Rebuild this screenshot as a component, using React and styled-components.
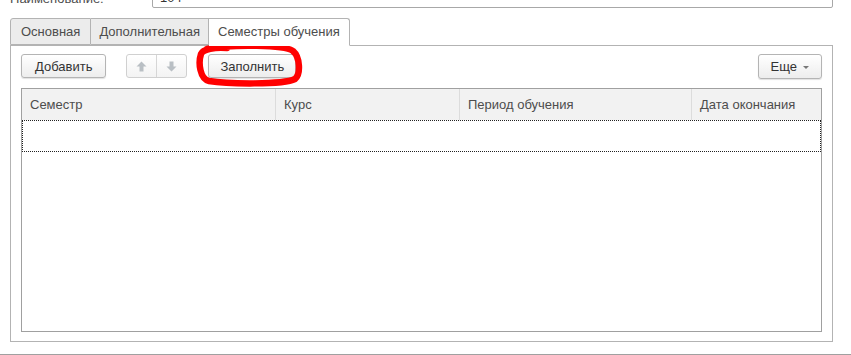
import styled, { createGlobalStyle } from "styled-components";

const Global = createGlobalStyle`
  html, body {
    margin: 0;
    padding: 0;
    background: #fff;
    font-family: "Liberation Sans", Arial, sans-serif;
    font-size: 13px;
    color: #4d4d4d;
    overflow: hidden;
  }
`;

const Page = styled.div`
  width: 851px;
  height: 355px;
  overflow: hidden;
`;

const FieldRow = styled.div`
  display: flex;
  align-items: flex-end;
  height: 24px;
  margin-top: -16px;
  padding-left: 10px;
`;

const FieldLabel = styled.div`
  width: 142px;
  line-height: 16px;
  margin-bottom: 1px;
`;

const FieldInput = styled.div`
  box-sizing: border-box;
  width: 681px;
  height: 24px;
  border: 1px solid #a8a8a8;
  border-radius: 2px;
  padding: 5px 7px 0;
  line-height: 16px;
  color: #333;
`;

const Tabs = styled.div`
  display: flex;
  align-items: flex-end;
  margin: 10px 0 0 10px;
  height: 27px;
  position: relative;
  z-index: 1;
`;

const Tab = styled.div`
  box-sizing: border-box;
  height: ${(p) => (p.$active ? "28px" : "27px")};
  margin-bottom: ${(p) => (p.$active ? "-1px" : "0")};
  padding: 0 ${(p) => p.$pad}px;
  display: flex;
  align-items: center;
  border: 1px solid #b3b3b3;
  border-left-width: ${(p) => (p.$first ? "1px" : "0")};
  border-bottom-color: ${(p) => (p.$active ? "#fff" : "#b3b3b3")};
  border-radius: ${(p) => (p.$first ? "3px 0 0 0" : p.$last ? "0 3px 0 0" : "0")};
  background: ${(p) => (p.$active ? "#fff" : "#ececec")};
  color: #4d4d4d;
  padding-bottom: ${(p) => (p.$active ? "1px" : "0")};
  white-space: nowrap;
`;

const Panel = styled.div`
  box-sizing: border-box;
  margin-left: 10px;
  width: 823px;
  height: 297px;
  border: 1px solid #b3b3b3;
  padding: 8px 10px 9px 10px;
  display: flex;
  flex-direction: column;
  gap: 10px;
`;

const Toolbar = styled.div`
  display: flex;
  align-items: flex-start;
  height: 24px;
  position: relative;
`;

const Button = styled.div`
  box-sizing: border-box;
  height: ${(p) => (p.$tall ? "25px" : "24px")};
  padding: 0 ${(p) => p.$pad || 12}px;
  display: flex;
  align-items: center;
  gap: 6px;
  border: 1px solid #b4b4b4;
  border-radius: 3px;
  background: linear-gradient(#ffffff, #ededed);
  box-shadow: 0 1px 1px rgba(0, 0, 0, 0.12);
  color: #333;
  margin-left: ${(p) => p.$ml || 0}px;
  white-space: nowrap;
`;

const Group = styled.div`
  box-sizing: border-box;
  display: flex;
  height: 24px;
  margin-left: 20px;
  border: 1px solid #d0d0d0;
  border-radius: 3px;
  background: linear-gradient(#ffffff, #f3f3f3);
`;

const GroupCell = styled.div`
  width: 29px;
  display: flex;
  align-items: center;
  justify-content: center;
  border-left: ${(p) => (p.$sep ? "1px solid #d6d6d6" : "none")};
`;

const Spacer = styled.div`
  flex: 1;
`;

const Caret = styled.span`
  width: 0;
  height: 0;
  border-left: 3px solid transparent;
  border-right: 3px solid transparent;
  border-top: 3px solid #777;
  margin-top: 1px;
`;

const Marker = styled.svg`
  position: absolute;
  left: 172px;
  top: -11px;
  pointer-events: none;
`;

const Table = styled.div`
  box-sizing: border-box;
  flex: 1;
  border: 1px solid #a0a0a0;
  display: flex;
  flex-direction: column;
`;

const HeaderRow = styled.div`
  display: grid;
  grid-template-columns: 253px 184px 232px 1fr;
  height: 31px;
  background: #f2f2f2;
`;

const HeaderCell = styled.div`
  display: flex;
  align-items: center;
  padding-left: 8px;
  border-left: ${(p) => (p.$first ? "none" : "1px solid #dcdcdc")};
  color: #4d4d4d;
  white-space: nowrap;
  overflow: hidden;
`;

const EmptyRow = styled.div`
  box-sizing: border-box;
  height: 32px;
  border: 1px dotted #222;
`;

const BottomLine = styled.div`
  margin-top: 12px;
  height: 1px;
  background: #a0a0a0;
`;

const Arrow = ({ down }) => (
  <svg width="11" height="11" viewBox="0 0 11 11">
    <path
      d="M5.5 0.5 L10.5 5.5 L7.5 5.5 L7.5 10.5 L3.5 10.5 L3.5 5.5 L0.5 5.5 Z"
      fill="#b9bfc4"
      transform={down ? "rotate(180 5.5 5.5)" : undefined}
    />
  </svg>
);

const columns = ["Семестр", "Курс", "Период обучения", "Дата окончания"];

export default function App() {
  return (
    <Page>
      <Global />
      <FieldRow>
        <FieldLabel>Наименование:</FieldLabel>
        <FieldInput>104</FieldInput>
      </FieldRow>
      <Tabs>
        <Tab $first $pad={10}>Основная</Tab>
        <Tab $pad={8}>Дополнительная</Tab>
        <Tab $active $last $pad={9}>Семестры обучения</Tab>
      </Tabs>
      <Panel>
        <Toolbar>
          <Button $pad={13}>Добавить</Button>
          <Group>
            <GroupCell><Arrow /></GroupCell>
            <GroupCell $sep><Arrow down /></GroupCell>
          </Group>
          <Button $ml={21} $pad={11}>Заполнить</Button>
          <Spacer />
          <Button $pad={12} $tall>
            Еще
            <Caret />
          </Button>
          <Marker width="116" height="46" viewBox="0 0 116 46">
            <path
              d="M14 6 C40 1, 92 2, 100 8 C107 14, 108 31, 102 36 C90 42, 34 41, 16 38 C7 36, 5 20, 8 11 C10 6, 22 4, 34 5"
              fill="none"
              stroke="#ff0000"
              strokeWidth="6.5"
              strokeLinecap="round"
              strokeLinejoin="round"
            />
          </Marker>
        </Toolbar>
        <Table>
          <HeaderRow>
            {columns.map((c, i) => (
              <HeaderCell key={c} $first={i === 0}>{c}</HeaderCell>
            ))}
          </HeaderRow>
          <EmptyRow />
        </Table>
      </Panel>
      <BottomLine />
    </Page>
  );
}
